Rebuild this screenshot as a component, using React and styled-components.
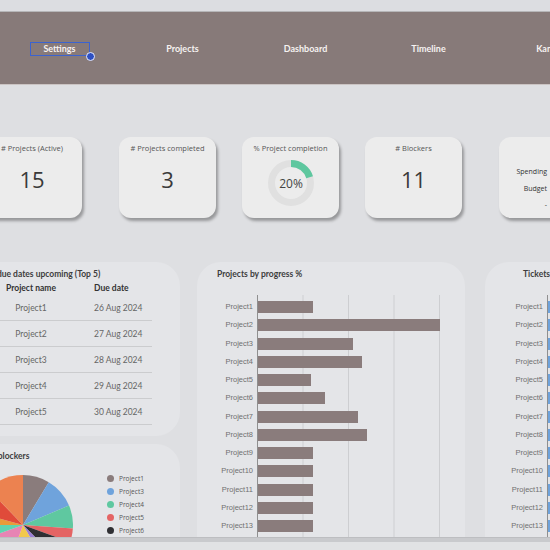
import styled, { createGlobalStyle } from 'styled-components';

const GlobalStyle = createGlobalStyle`
  html, body {
    margin: 0;
    padding: 0;
    background: #dedfe2;
    overflow: hidden;
  }
`;

const navItems = ['Settings', 'Projects', 'Dashboard', 'Timeline', 'Kanban'];

const dueDates = [
  ['Project1', '26 Aug 2024'],
  ['Project2', '27 Aug 2024'],
  ['Project3', '28 Aug 2024'],
  ['Project4', '29 Aug 2024'],
  ['Project5', '30 Aug 2024'],
];

const progress = [30, 100, 52, 57, 29, 37, 55, 60, 30, 30, 30, 30, 30];
const tickets = [40, 30, 45, 38, 42, 36, 30, 44, 40, 35, 37, 39, 41];

const blockers = [
  { name: 'Project1', color: '#8a7c7c', deg: 31 },
  { name: 'Project3', color: '#6fa3dc', deg: 36 },
  { name: 'Project4', color: '#5fc8a0', deg: 27 },
  { name: 'Project5', color: '#e46464', deg: 16 },
  { name: 'Project6', color: '#2f2f33', deg: 25 },
  { name: 'Project7', color: '#9b7fd6', deg: 15 },
  { name: 'Project8', color: '#f2c94c', deg: 50 },
  { name: 'Project9', color: '#e784b4', deg: 50 },
  { name: 'Project10', color: '#5fd3b0', deg: 20 },
  { name: 'Project11', color: '#e89a3a', deg: 15 },
  { name: 'Project12', color: '#e04b3a', deg: 31 },
  { name: 'Project13', color: '#ec8250', deg: 44 },
];

const Page = styled.div`
  width: 550px;
  height: 550px;
  display: flex;
  flex-direction: column;
  overflow: hidden;
  background: #dedfe2;
  font-family: "Open Sans", sans-serif;
`;

const TopStrip = styled.div`
  flex: none;
  height: 11px;
  background: #dcdde1;
  border-bottom: 1px solid #b6b6b8;
`;

const NavBar = styled.nav`
  flex: none;
  height: 72px;
  background: #877a79;
  border-bottom: 1px solid #cbc4c3;
  display: flex;
  align-items: center;
`;

const NavList = styled.div`
  display: flex;
  margin-left: -2px;
  margin-top: 2px;
`;

const NavItem = styled.div`
  flex: none;
  width: 123px;
  display: flex;
  justify-content: center;
`;

const NavLabel = styled.span`
  position: relative;
  box-sizing: border-box;
  min-width: 60px;
  height: 14px;
  line-height: 12px;
  text-align: center;
  font-family: Lato, "DejaVu Sans", sans-serif;
  font-weight: 700;
  font-size: 9px;
  color: #f6f2f1;
  border: 1px solid ${({ $selected }) => ($selected ? '#3b63d0' : 'transparent')};

  &::after {
    content: '';
    display: ${({ $selected }) => ($selected ? 'block' : 'none')};
    position: absolute;
    right: -6px;
    bottom: -6px;
    width: 7px;
    height: 7px;
    border-radius: 50%;
    background: #2d4fc2;
    border: 1px solid #e8ecff;
  }
`;

const Content = styled.main`
  flex: 1;
  min-height: 0;
  overflow: hidden;
`;

const CardsRow = styled.div`
  display: flex;
  margin-top: 52px;
  margin-left: -18px;
`;

const Card = styled.div`
  flex: none;
  box-sizing: border-box;
  width: ${({ $w }) => $w}px;
  height: 81px;
  margin-left: ${({ $gap }) => $gap}px;
  padding-top: 6px;
  background: #ececec;
  border-radius: 12px;
  box-shadow: 2px 3px 3px rgba(0, 0, 0, 0.32);
  display: flex;
  flex-direction: column;
  align-items: center;
`;

const CardTitle = styled.div`
  font-size: 7.5px;
  line-height: 11px;
  color: #555;
  white-space: nowrap;
`;

const CardValue = styled.div`
  margin-top: 12px;
  font-size: 22px;
  line-height: 26px;
  color: #3a3a3a;
`;

const Donut = styled.svg`
  margin-top: 6px;
  display: block;
`;

const MoneyTable = styled.div`
  align-self: flex-start;
  margin-top: 21px;
  display: grid;
  grid-template-columns: 48px auto;
  column-gap: 10px;
  font-size: 7px;
  line-height: 16.5px;
  color: #333;

  & > span:nth-child(odd) {
    text-align: right;
  }
`;

const LowerGrid = styled.div`
  display: flex;
  align-items: flex-start;
  margin-top: 44px;
  margin-left: -60px;
`;

const LeftColumn = styled.div`
  flex: none;
  width: 240px;
  display: flex;
  flex-direction: column;
  gap: 8px;
`;

const Panel = styled.section`
  flex: none;
  box-sizing: border-box;
  width: ${({ $w }) => $w}px;
  height: ${({ $h }) => $h}px;
  margin-left: ${({ $gap }) => $gap || 0}px;
  padding-left: ${({ $pad }) => $pad || 0}px;
  padding-top: 7px;
  background: #e4e5e8;
  border-radius: 24px;
  overflow: hidden;
`;

const PanelTitle = styled.div`
  margin-left: ${({ $indent }) => $indent || 0}px;
  font-family: Lato, "DejaVu Sans", sans-serif;
  font-weight: 700;
  font-size: 8.5px;
  line-height: 10px;
  color: #3d3d3d;
  white-space: nowrap;
`;

const DueTable = styled.div`
  margin-top: 1px;
  width: 152px;
  font-family: Lato, "DejaVu Sans", sans-serif;
  font-size: 8.5px;
`;

const TableRow = styled.div`
  display: grid;
  grid-template-columns: 62px 90px;
  align-items: center;
  box-sizing: border-box;
  height: ${({ $head }) => ($head ? 15 : 26)}px;
  font-weight: ${({ $head }) => ($head ? 700 : 400)};
  color: ${({ $head }) => ($head ? '#333' : '#666')};
  border-bottom: ${({ $head }) => ($head ? 'none' : '1px solid #cbccce')};

  & > span:first-child {
    text-align: center;
  }
  & > span:last-child {
    padding-left: 32px;
  }
`;

const PieRow = styled.div`
  display: flex;
  align-items: flex-start;
  margin-top: 14px;
`;

const PieSvg = styled.svg`
  flex: none;
  display: block;
  margin-left: -27px;
`;

const Legend = styled.ul`
  list-style: none;
  margin: -3px 0 0 34px;
  padding: 0;
`;

const LegendItem = styled.li`
  display: flex;
  align-items: center;
  gap: 5px;
  height: 13px;
  font-size: 6.5px;
  color: #555;
`;

const Dot = styled.span`
  width: 7px;
  height: 7px;
  border-radius: 50%;
  background: ${({ $color }) => $color};
`;

const Chart = styled.div`
  display: flex;
  margin-top: 16px;
  margin-left: ${({ $shift }) => $shift || 0}px;
`;

const Labels = styled.div`
  flex: none;
  width: ${({ $w }) => $w}px;
  box-sizing: border-box;
  padding: 3px 4px 0 0;
  display: flex;
  flex-direction: column;
  align-items: flex-end;
`;

const AxisLabel = styled.div`
  height: 18.25px;
  line-height: 18.25px;
  font-family: "Liberation Sans", Arial, sans-serif;
  font-size: 7.5px;
  color: #707070;
`;

const Plot = styled.div`
  flex: none;
  width: 182px;
  padding: 3px 0 6px;
  border-left: 1px solid #8f8f8f;
  background-image: linear-gradient(to right, transparent calc(100% - 1px), #cdced1 calc(100% - 1px));
  background-size: 45.5px 100%;
`;

const BarRow = styled.div`
  height: 18.25px;
  display: flex;
  align-items: center;
`;

const Bar = styled.div`
  height: 12px;
  background: ${({ $color }) => $color};
`;

const Footer = styled.div`
  flex: none;
  height: 12px;
  border-top: 1px solid #bdbec1;
  background: linear-gradient(#c9cacd 0 4px, #e1e2e4 4px);
`;

const slicePath = (r, a0, a1) => {
  const pt = (a) => {
    const rad = (a * Math.PI) / 180;
    return `${(r + r * Math.sin(rad)).toFixed(2)} ${(r - r * Math.cos(rad)).toFixed(2)}`;
  };
  const large = a1 - a0 > 180 ? 1 : 0;
  return `M${r} ${r} L${pt(a0)} A${r} ${r} 0 ${large} 1 ${pt(a1)} Z`;
};

const PieChart = () => {
  let angle = 0;
  return (
    <PieSvg width="100" height="100" viewBox="0 0 100 100">
      {blockers.map((s) => {
        const d = slicePath(50, angle, angle + s.deg);
        angle += s.deg;
        return <path key={s.name} d={d} fill={s.color} />;
      })}
    </PieSvg>
  );
};

const CompletionDonut = ({ pct }) => {
  const r = 19.5;
  const c = 2 * Math.PI * r;
  return (
    <Donut width="46" height="46" viewBox="0 0 46 46">
      <circle cx="23" cy="23" r={r} fill="none" stroke="#e0e0e0" strokeWidth="7" />
      <circle
        cx="23"
        cy="23"
        r={r}
        fill="none"
        stroke="#5ec79f"
        strokeWidth="7"
        strokeDasharray={`${(c * pct) / 100} ${c}`}
        transform="rotate(-90 23 23)"
      />
      <text x="23" y="27.5" textAnchor="middle" fontFamily="Open Sans, sans-serif" fontSize="12" fill="#444">
        {pct}%
      </text>
    </Donut>
  );
};

const BarChart = ({ values, max, color, labelWidth, shift }) => (
  <Chart $shift={shift}>
    <Labels $w={labelWidth}>
      {values.map((_, i) => (
        <AxisLabel key={i}>Project{i + 1}</AxisLabel>
      ))}
    </Labels>
    <Plot>
      {values.map((v, i) => (
        <BarRow key={i}>
          <Bar $color={color} style={{ width: `${(v / max) * 100}%` }} />
        </BarRow>
      ))}
    </Plot>
  </Chart>
);

const App = () => (
  <Page>
    <GlobalStyle />
    <TopStrip />
    <NavBar>
      <NavList>
        {navItems.map((item, i) => (
          <NavItem key={item}>
            <NavLabel $selected={i === 0}>{item}</NavLabel>
          </NavItem>
        ))}
      </NavList>
    </NavBar>

    <Content>
      <CardsRow>
        <Card $w={100} $gap={0}>
          <CardTitle># Projects (Active)</CardTitle>
          <CardValue>15</CardValue>
        </Card>
        <Card $w={97} $gap={37}>
          <CardTitle># Projects completed</CardTitle>
          <CardValue>3</CardValue>
        </Card>
        <Card $w={97} $gap={26}>
          <CardTitle>% Project completion</CardTitle>
          <CompletionDonut pct={20} />
        </Card>
        <Card $w={97} $gap={26}>
          <CardTitle># Blockers</CardTitle>
          <CardValue>11</CardValue>
        </Card>
        <Card $w={120} $gap={37}>
          <MoneyTable>
            <span>Spending</span>
            <span>€ 42.5K</span>
            <span>Budget</span>
            <span>€ 60.0K</span>
            <span>-</span>
            <span>€ 17.5K</span>
          </MoneyTable>
        </Card>
      </CardsRow>

      <LowerGrid>
        <LeftColumn>
          <Panel $w={240} $h={174} $pad={60}>
            <PanelTitle $indent={-36}>Projects due dates upcoming (Top 5)</PanelTitle>
            <DueTable>
              <TableRow $head>
                <span>Project name</span>
                <span>Due date</span>
              </TableRow>
              {dueDates.map(([name, date]) => (
                <TableRow key={name}>
                  <span>{name}</span>
                  <span>{date}</span>
                </TableRow>
              ))}
            </DueTable>
          </Panel>
          <Panel $w={240} $h={200} $pad={60}>
            <PanelTitle $indent={-54}>Projects with blockers</PanelTitle>
            <PieRow>
              <PieChart />
              <Legend>
                {blockers.slice(0, 5).map((s) => (
                  <LegendItem key={s.name}>
                    <Dot $color={s.color} />
                    {s.name}
                  </LegendItem>
                ))}
              </Legend>
            </PieRow>
          </Panel>
        </LeftColumn>

        <Panel $w={268} $h={320} $gap={17}>
          <PanelTitle $indent={20}>Projects by progress %</PanelTitle>
          <BarChart values={progress} max={100} color="#8a7c7c" labelWidth={60} />
        </Panel>

        <Panel $w={160} $h={320} $gap={20}>
          <PanelTitle $indent={38}>Tickets by project</PanelTitle>
          <BarChart values={tickets} max={100} color="#6ea2db" labelWidth={60} shift={2} />
        </Panel>
      </LowerGrid>
    </Content>

    <Footer />
  </Page>
);

export default App;
